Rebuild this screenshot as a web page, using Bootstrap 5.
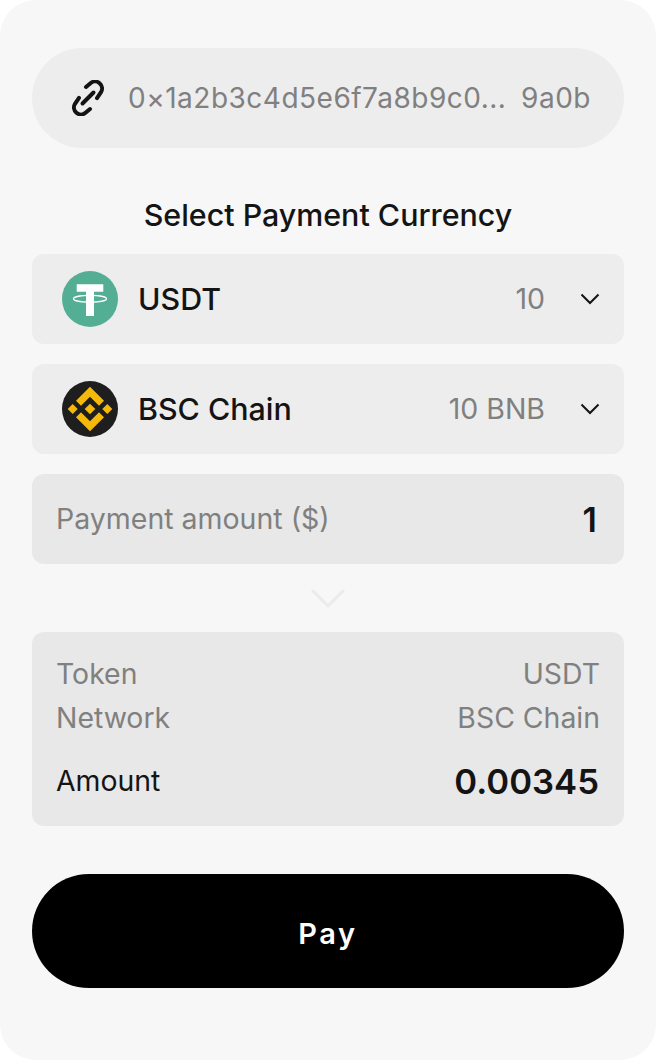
<!DOCTYPE html>
<html lang="en">
<head>
  <meta charset="UTF-8" />
  <meta name="viewport" content="width=device-width, initial-scale=1" />
  <title>Pay</title>
  <link href="https://cdn.jsdelivr.net/npm/bootstrap@5.3.0/dist/css/bootstrap.min.css" rel="stylesheet">
  <style>
    body {
      background: #fff;
      font-family: "Inter", "Liberation Sans", sans-serif;
      color: #141414;
    }
    .pay-panel {
      width: 656px;
      height: 1060px;
      background: #f7f7f7;
      border-radius: 36px;
      padding: 48px 32px 0;
    }
    .addr-pill {
      height: 100px;
      border-radius: 50px;
      background: #ededed;
      padding: 0 33px 0 38px;
      font-size: 28px;
      letter-spacing: .5px;
      color: #808080;
    }
    .addr-head { margin-left: 22px; flex: 1; white-space: nowrap; }
    .pay-title {
      margin: 50px 0 22px;
      height: 34px;
      line-height: 34px;
      font-size: 30.400px;
      font-weight: 450;
      text-align: center;
    }
    .pick-row {
      height: 90px;
      background: #ededed;
      border-radius: 12px;
      padding: 0 24px 0 30px;
      margin-bottom: 20px;
      font-size: 30.400px;
      font-weight: 450;
    }
    .pick-name { margin-left: 20px; flex: 1; padding-top: 1px; }
    .pick-val { font-weight: 400; font-size: 28.500px; color: #808080; margin-right: 35px; }
    .amount-row {
      height: 90px;
      background: #e8e8e8;
      border-radius: 12px;
      padding: 0 27px 0 24px;
      font-size: 28.500px;
      color: #808080;
    }
    .amount-val { font-size: 34px; font-weight: 600; color: #141414; }
    .down-mark { height: 68px; padding-top: 1px; }
    .info-box {
      height: 194px;
      background: #e8e8e8;
      border-radius: 12px;
      padding: 20px 24px 0 24px;
      font-size: 28.400px;
      line-height: 44px;
      color: #808080;
    }
    .info-total { margin-top: 19px; color: #141414; padding-right: 1px; }
    .info-total b { font-size: 34.700px; font-weight: 600; }
    .pay-btn {
      display: block;
      width: 100%;
      height: 114px;
      margin-top: 48px;
      padding-top: 6px;
      border: 0;
      border-radius: 57px;
      background: #000;
      color: #fff;
      font-size: 29px;
      font-weight: 600;
      letter-spacing: 2.600px;
    }
  </style>
</head>
<body class="m-0">

<div class="pay-panel">

  <!-- Address -->
  <div class="addr-pill d-flex align-items-center">
    <svg width="36" height="36" viewBox="0 0 36 36" fill="none" stroke="#141414" stroke-width="4" stroke-linecap="round">
      <path d="M16 7l4.500-3.800a7 7 0 0 1 10.500 9l-4 6"/>
      <path d="M20 29l-4.500 3.800a7 7 0 0 1-10.500-9l4-6"/>
      <path d="M12.500 23.500l11-11"/>
    </svg>
    <span class="addr-head">0×1a2b3c4d5e6f7a8b9c0...</span>
    <span>9a0b</span>
  </div>

  <div class="pay-title">Select Payment Currency</div>

  <!-- Token -->
  <div class="pick-row d-flex align-items-center">
    <svg width="56" height="56" viewBox="0 0 56 56">
      <circle cx="28" cy="28" r="28" fill="#53ae94"/>
      <path d="M14.700 13.300h26.600v7.400H32V45h-8V20.700h-9.300z" fill="#fff"/>
      <ellipse cx="28" cy="27.700" rx="16.500" ry="3.400" fill="none" stroke="#fff" stroke-width="1.200"/>
    </svg>
    <span class="pick-name">USDT</span>
    <span class="pick-val">10</span>
    <svg width="20" height="12" viewBox="0 0 20 12" fill="none" stroke="#141414" stroke-width="2"><path d="M1.500 1.500L10 10l8.500-8.500"/></svg>
  </div>

  <!-- Chain -->
  <div class="pick-row d-flex align-items-center">
    <svg width="56" height="56" viewBox="0 0 56 56">
      <circle cx="28" cy="28" r="28" fill="#1e1e1e"/>
      <g fill="#f5b90b">
        <path d="M28 5.700l14 14-5 5-9-9-9 9-5-5z"/>
        <path d="M28 50.300l-14-14 5-5 9 9 9-9 5 5z"/>
        <path d="M28 22.700l5.300 5.300-5.300 5.300-5.300-5.300z"/>
        <path d="M10.700 23l5 5-5 5-5-5z"/>
        <path d="M45.300 23l5 5-5 5-5-5z"/>
      </g>
    </svg>
    <span class="pick-name">BSC Chain</span>
    <span class="pick-val">10 BNB</span>
    <svg width="20" height="12" viewBox="0 0 20 12" fill="none" stroke="#141414" stroke-width="2"><path d="M1.500 1.500L10 10l8.500-8.500"/></svg>
  </div>

  <!-- Amount -->
  <div class="amount-row d-flex align-items-center justify-content-between">
    <span>Payment amount ($)</span>
    <span class="amount-val">1</span>
  </div>

  <div class="down-mark d-flex align-items-center justify-content-center">
    <svg width="34" height="20" viewBox="0 0 34 20" fill="none" stroke="#ebebeb" stroke-width="3" stroke-linecap="round"><path d="M2 2l15 15L32 2"/></svg>
  </div>

  <!-- Summary -->
  <div class="info-box">
    <div class="d-flex justify-content-between"><span>Token</span><span>USDT</span></div>
    <div class="d-flex justify-content-between"><span>Network</span><span>BSC Chain</span></div>
    <div class="info-total d-flex justify-content-between align-items-center"><span>Amount</span><b>0.00345</b></div>
  </div>

  <button type="button" class="pay-btn">Pay</button>

</div>

<script src="https://cdn.jsdelivr.net/npm/bootstrap@5.3.0/dist/js/bootstrap.bundle.min.js"></script>
</body>
</html>
